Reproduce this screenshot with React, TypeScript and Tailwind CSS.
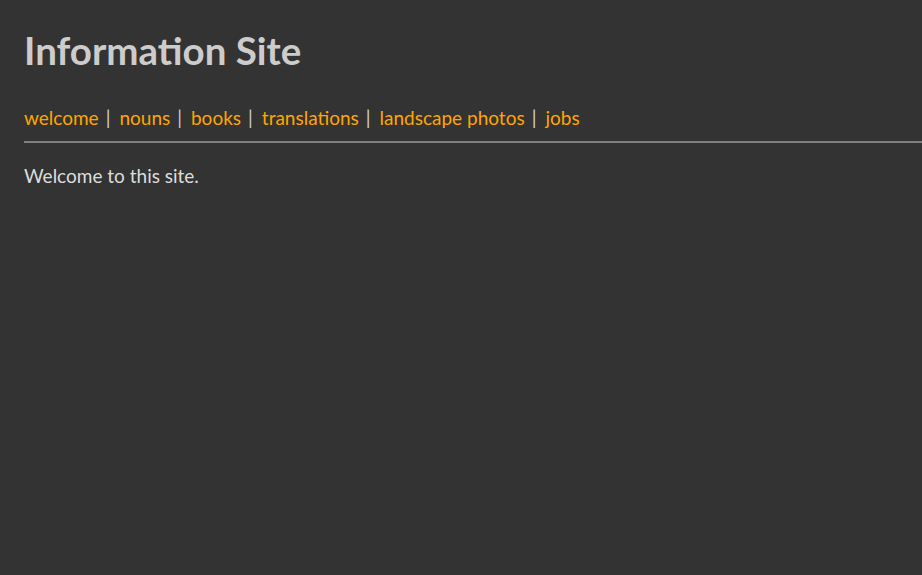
import React from 'react'

const links = ['welcome', 'nouns', 'books', 'translations', 'landscape photos', 'jobs']

export default function App() {
  return (
    <div className="min-h-[575px] bg-[#333333] pl-6 pt-[26px] font-['Lato','Liberation_Sans',sans-serif]">
      <h1 className="text-[38.5px] font-bold leading-[48px] text-[#cccccc]">Information Site</h1>
      <nav className="mt-[32px] flex items-baseline text-[19px] leading-[24px] text-[#cccccc]">
        {links.map((l, i) => (
          <React.Fragment key={l}>
            {i > 0 && <span className="ml-[7px] mr-[9px]">|</span>}
            <a href="#" className="text-[#ffa500]">{l}</a>
          </React.Fragment>
        ))}
      </nav>
      <hr className="mt-[11px] border-t-2 border-[#808080]" />
      <p className="mt-[21px] text-[19px] leading-[24px] text-[#dddddd]">Welcome to this site.</p>
    </div>
  )
}
